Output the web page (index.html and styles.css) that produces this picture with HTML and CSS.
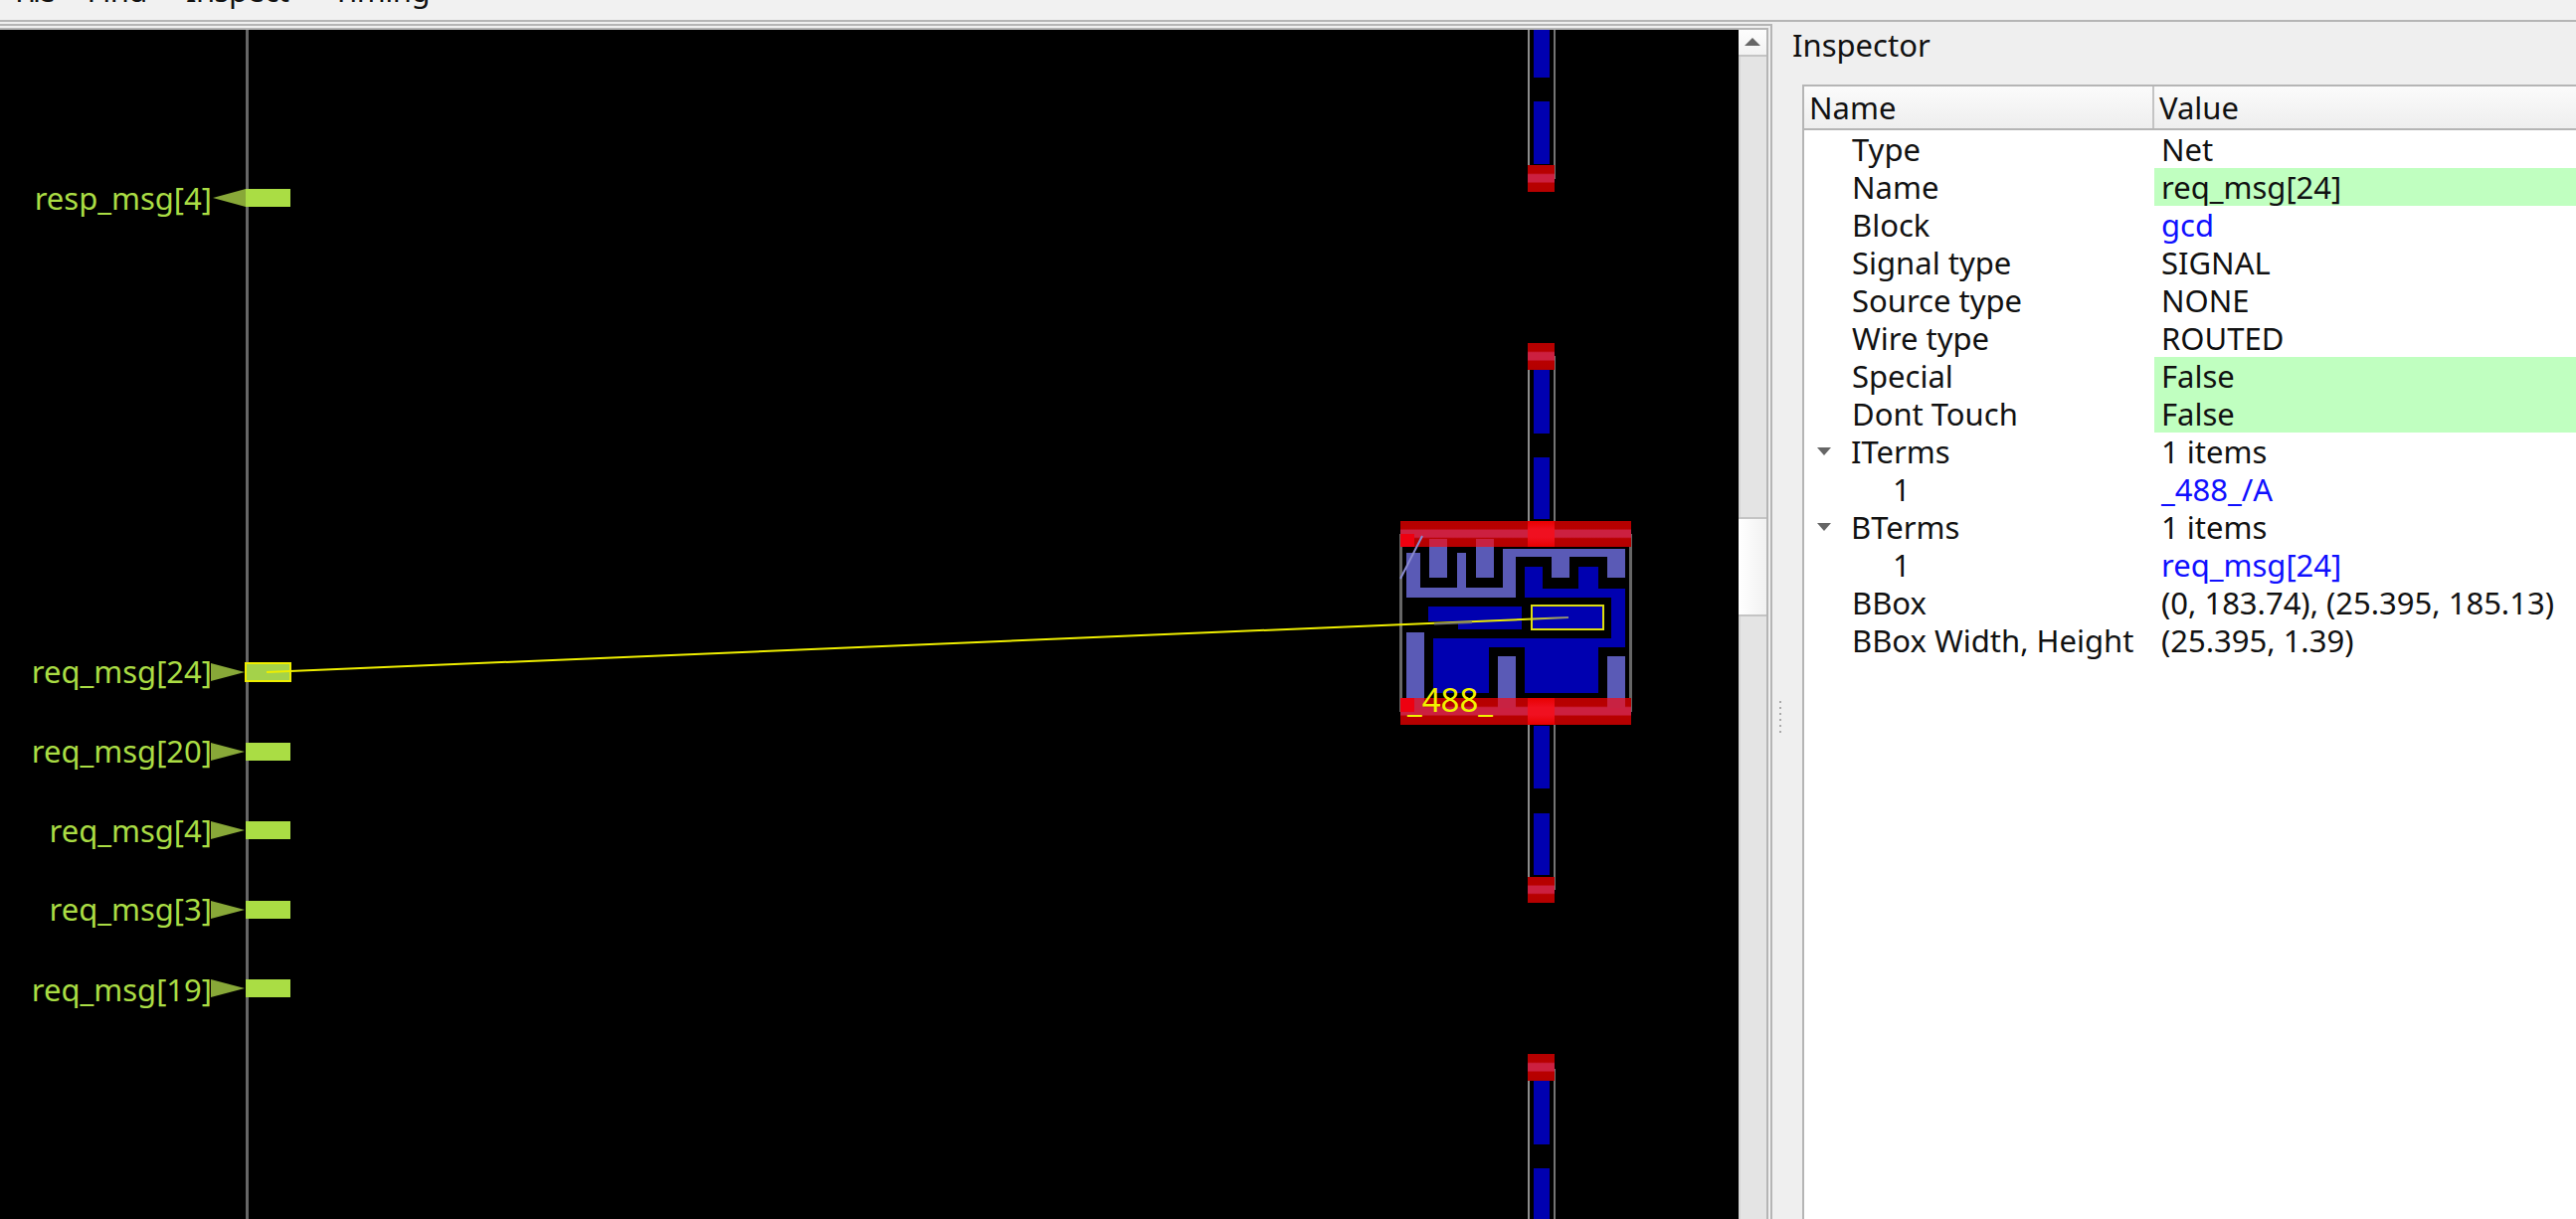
FILE: index.html
```html
<!DOCTYPE html>
<html>
<head>
    <title>OpenROAD</title>
    <link rel="stylesheet" href="styles.css">
</head>
<body>
    <div class="menu-bar">
        <span class="menu-item file">File</span>
        <span class="menu-item find">Find</span>
        <span class="menu-item inspect">Inspect</span>
        <span class="menu-item timing">Timing</span>
    </div>

    <div class="workspace">
        <div class="view-outer">
            <div class="view-inner">
                <svg class="layout" viewBox="0 30 1748 1196" width="1748" height="1196">
                    <defs>
                        <linearGradient id="railDark" x1="0" y1="0" x2="0" y2="1">
                            <stop offset="0" stop-color="#b40000"/>
                            <stop offset="0.3" stop-color="#b80000"/>
                            <stop offset="0.36" stop-color="#cc2040"/>
                            <stop offset="0.62" stop-color="#cc2040"/>
                            <stop offset="0.68" stop-color="#b80000"/>
                            <stop offset="1" stop-color="#b40000"/>
                        </linearGradient>
                        <linearGradient id="railBright" x1="0" y1="0" x2="0" y2="1">
                            <stop offset="0" stop-color="#e80000"/>
                            <stop offset="0.36" stop-color="#f01020"/>
                            <stop offset="0.62" stop-color="#f01020"/>
                            <stop offset="1" stop-color="#e80000"/>
                        </linearGradient>
                        <linearGradient id="flightEnd" gradientUnits="userSpaceOnUse" x1="1530" y1="0" x2="1577" y2="0">
                            <stop offset="0" stop-color="#eeee00"/>
                            <stop offset="1" stop-color="#888880"/>
                        </linearGradient>
                    </defs>

                    <!-- die edge -->
                    <rect class="edge" x="247" y="30" width="3" height="1196"/>

                    <!-- power stubs -->
                    <g>
                        <rect class="stub-edge" x="1536" y="30" width="2" height="150"/>
                        <rect class="stub-edge dim" x="1562" y="30" width="2" height="150"/>
                        <rect class="metal" x="1542" y="30" width="16" height="48"/>
                        <rect class="metal" x="1542" y="102" width="16" height="63"/>
                        <rect class="cap" x="1536" y="166" width="27" height="27"/>

                        <rect class="stub-edge" x="1536" y="358" width="2" height="166"/>
                        <rect class="stub-edge dim" x="1562" y="358" width="2" height="166"/>
                        <rect class="metal" x="1542" y="372" width="16" height="64"/>
                        <rect class="metal" x="1542" y="460" width="16" height="62"/>
                        <rect class="cap" x="1536" y="345" width="27" height="27"/>

                        <rect class="stub-edge" x="1536" y="729" width="2" height="166"/>
                        <rect class="stub-edge dim" x="1562" y="729" width="2" height="166"/>
                        <rect class="metal" x="1542" y="730" width="16" height="63"/>
                        <rect class="metal" x="1542" y="818" width="16" height="62"/>
                        <rect class="cap" x="1536" y="882" width="27" height="26"/>

                        <rect class="stub-edge" x="1536" y="1075" width="2" height="151"/>
                        <rect class="stub-edge dim" x="1562" y="1075" width="2" height="151"/>
                        <rect class="metal" x="1542" y="1087" width="16" height="64"/>
                        <rect class="metal" x="1542" y="1175" width="16" height="51"/>
                        <rect class="cap" x="1536" y="1060" width="27" height="27"/>
                    </g>

                    <!-- cell _488_ -->
                    <g>
                        <rect class="cell-edge" x="1407" y="537" width="3" height="179"/>
                        <rect class="cell-edge" x="1638" y="537" width="3" height="179"/>

                        <rect class="poly" x="1414" y="556" width="14" height="45"/>
                        <rect class="poly" x="1414" y="591" width="110" height="10"/>
                        <rect class="poly" x="1437" y="542" width="18" height="39"/>
                        <rect class="poly" x="1465" y="556" width="9" height="36"/>
                        <rect class="poly" x="1484" y="542" width="18" height="39"/>
                        <rect class="poly" x="1511" y="552" width="13" height="49"/>
                        <rect class="poly" x="1511" y="552" width="123" height="8"/>
                        <rect class="poly" x="1560" y="552" width="18" height="29"/>
                        <rect class="poly" x="1616" y="552" width="18" height="29"/>
                        <rect class="poly" x="1414" y="636" width="18" height="76"/>
                        <rect class="poly" x="1506" y="660" width="18" height="52"/>
                        <rect class="poly" x="1616" y="660" width="18" height="52"/>

                        <rect class="metal" x="1533" y="570" width="18" height="31"/>
                        <rect class="metal" x="1587" y="570" width="20" height="31"/>
                        <rect class="metal" x="1533" y="592" width="101" height="9"/>
                        <rect class="metal" x="1620" y="601" width="14" height="50"/>
                        <rect class="metal" x="1441" y="642" width="193" height="9"/>
                        <rect class="metal" x="1441" y="651" width="56" height="46"/>
                        <rect class="metal" x="1533" y="651" width="74" height="46"/>
                        <rect class="metal" x="1436" y="610" width="94" height="15"/>
                        <rect class="metal" x="1466" y="625" width="64" height="8"/>
                        <rect class="metal" x="1540" y="610" width="72" height="23"/>

                        <rect class="rail" x="1408" y="524" width="232" height="26"/>
                        <rect class="rail" x="1408" y="702" width="232" height="27"/>
                        <rect class="rail-via" x="1536" y="524" width="27" height="26"/>
                        <rect class="rail-via" x="1536" y="702" width="27" height="27"/>
                        <rect class="rail-pin" x="1408" y="537" width="14" height="13"/>
                        <rect class="rail-pin" x="1408" y="702" width="14" height="14"/>
                        <rect class="rail-over" x="1437" y="542" width="18" height="8"/>
                        <rect class="rail-over" x="1484" y="542" width="18" height="8"/>
                        <rect class="rail-over" x="1422" y="702" width="10" height="10"/>
                        <rect class="rail-over" x="1506" y="702" width="18" height="10"/>
                        <rect class="rail-over" x="1616" y="702" width="18" height="10"/>

                        <line class="corner-mark" x1="1408" y1="582" x2="1430" y2="539"/>
                        <text class="cell-name" x="1415" y="716">_488_</text>
                        <rect class="pin-box" x="1540" y="609" width="72" height="24"/>
                    </g>

                    <!-- flight line to the selected pin -->
                    <line class="flight" x1="268" y1="676" x2="1530" y2="623"/>
                    <line class="flight-end" x1="1530" y1="623" x2="1577" y2="621"/>
                    <line class="flight-shade" x1="1442" y1="627.5" x2="1480" y2="626"/>

                    <!-- ports -->
                    <polygon class="port-arrow" points="214,199 247,190 247,208"/>
                    <rect class="port" x="247" y="190" width="45" height="18"/>
                    <text class="port-name" x="213" y="211">resp_msg[4]</text>

                    <polygon class="port-arrow" points="212,667 246,676 212,685"/>
                    <rect class="port selected" x="247" y="667" width="45" height="18"/>
                    <text class="port-name" x="213" y="687">req_msg[24]</text>
                    <line class="flight" x1="268" y1="676" x2="292" y2="675"/>

                    <polygon class="port-arrow" points="212,747 246,756 212,765"/>
                    <rect class="port" x="247" y="747" width="45" height="18"/>
                    <text class="port-name" x="213" y="767">req_msg[20]</text>

                    <polygon class="port-arrow" points="212,826 246,835 212,844"/>
                    <rect class="port" x="247" y="826" width="45" height="18"/>
                    <text class="port-name" x="213" y="847">req_msg[4]</text>

                    <polygon class="port-arrow" points="212,906 246,915 212,924"/>
                    <rect class="port" x="247" y="906" width="45" height="18"/>
                    <text class="port-name" x="213" y="926">req_msg[3]</text>

                    <polygon class="port-arrow" points="212,985 246,994 212,1003"/>
                    <rect class="port" x="247" y="985" width="45" height="18"/>
                    <text class="port-name" x="213" y="1007">req_msg[19]</text>
                </svg>
                <div class="scrollbar">
                    <div class="scroll-up"><span class="scroll-arrow"></span></div>
                    <div class="scroll-thumb"></div>
                </div>
            </div>
        </div>

        <div class="splitter"><div class="splitter-dots"></div></div>

        <div class="inspector">
            <div class="inspector-title">Inspector</div>
            <div class="tree">
                <div class="tree-header">
                    <div class="head-name">Name</div>
                    <div class="head-value">Value</div>
                </div>
                <div class="row"><div class="name">Type</div><div class="value">Net</div></div>
                <div class="row"><div class="name">Name</div><div class="value edit">req_msg[24]</div></div>
                <div class="row"><div class="name">Block</div><div class="value link">gcd</div></div>
                <div class="row"><div class="name">Signal type</div><div class="value">SIGNAL</div></div>
                <div class="row"><div class="name">Source type</div><div class="value">NONE</div></div>
                <div class="row"><div class="name">Wire type</div><div class="value">ROUTED</div></div>
                <div class="row"><div class="name">Special</div><div class="value edit">False</div></div>
                <div class="row"><div class="name">Dont Touch</div><div class="value edit">False</div></div>
                <div class="row"><div class="name parent"><span class="arrow"></span>ITerms</div><div class="value">1 items</div></div>
                <div class="row"><div class="name child">1</div><div class="value link">_488_/A</div></div>
                <div class="row"><div class="name parent"><span class="arrow"></span>BTerms</div><div class="value">1 items</div></div>
                <div class="row"><div class="name child">1</div><div class="value link">req_msg[24]</div></div>
                <div class="row"><div class="name">BBox</div><div class="value">(0, 183.74), (25.395, 185.13)</div></div>
                <div class="row"><div class="name">BBox Width, Height</div><div class="value">(25.395, 1.39)</div></div>
            </div>
        </div>
    </div>
</body>
</html>
```

FILE: styles.css
```css
html, body {
    margin: 0;
    height: 100%;
    overflow: hidden;
}
body {
    font-family: "Noto Sans", "Open Sans", sans-serif;
    font-size: 31px;
    color: #111;
    background-color: #efefef;
}

/* menu bar, only the bottom of the words is on screen */
.menu-bar {
    height: 20px;
    background-color: #f1f1f1;
    overflow: hidden;
    display: flex;
    align-items: flex-start;
}
.menu-item {
    line-height: 38px;
    margin-top: -29px;
    letter-spacing: -0.5px;
}
.file {
    margin-left: 15px;
    letter-spacing: -3px;
}
.find { margin-left: 35px; }
.inspect { margin-left: 39px; }
.timing { margin-left: 44px; }

.workspace {
    display: flex;
    height: 1206px;
    box-sizing: border-box;
    border-top: 2px solid #b5b5b5;
}
.view-outer {
    width: 1782px;
    box-sizing: border-box;
    margin-top: 2px;
    padding: 2px 2px 0 0;
    border-top: 2px solid #b5b5b5;
    border-right: 2px solid #b5b5b5;
}
.view-inner {
    display: flex;
    height: 100%;
    box-sizing: border-box;
    border-top: 2px solid #b5b5b5;
    border-right: 2px solid #b5b5b5;
}

/* layout view */
.layout {
    display: block;
    flex: none;
    background-color: #000;
}
.edge { fill: #666; }
.stub-edge { fill: #8c8c8c; }
.stub-edge.dim { fill: #747474; }
.cell-edge { fill: #666; }
.metal { fill: #0000b0; }
.poly { fill: #5a5ab6; }
.cap, .rail { fill: url(#railDark); }
.rail-via { fill: url(#railBright); }
.rail-pin { fill: #ee0010; }
.rail-over { fill: #c82242; }
.corner-mark {
    stroke: #8a8ad0;
    stroke-width: 2;
}
.cell-name {
    fill: #f2f200;
    font-size: 33px;
}
.pin-box {
    fill: none;
    stroke: #dddd10;
    stroke-width: 2;
}
.flight {
    stroke: #eeee00;
    stroke-width: 2;
}
.flight-end {
    stroke: url(#flightEnd);
    stroke-width: 2;
}
.flight-shade {
    stroke: #77776a;
    stroke-width: 2;
}
.port { fill: #aadd44; }
.port.selected {
    fill: #a4d24a;
    stroke: #eeee00;
    stroke-width: 2;
}
.port-arrow { fill: #88a838; }
.port-name {
    fill: #aadd44;
    font-size: 31px;
    text-anchor: end;
}

/* scrollbar of the layout view */
.scrollbar {
    width: 28px;
    box-sizing: border-box;
    background-color: #e4e4e4;
    border-left: 2px solid #d6d6d6;
}
.scroll-up {
    height: 27px;
    margin-left: -2px;
    display: flex;
    justify-content: center;
    padding-top: 8px;
    box-sizing: border-box;
    background: linear-gradient(#fdfdfd, #f2f2f2);
    border-bottom: 2px solid #c4c4c4;
}
.scroll-arrow {
    width: 0;
    height: 0;
    border-left: 8px solid transparent;
    border-right: 8px solid transparent;
    border-bottom: 8px solid #666;
}
.scroll-thumb {
    height: 100px;
    margin: 463px 0 0 -2px;
    box-sizing: border-box;
    background: linear-gradient(90deg, #fff, #f1f1f1);
    border-top: 2px solid #c4c4c4;
    border-bottom: 2px solid #c4c4c4;
}

.splitter {
    width: 20px;
    flex: none;
}
.splitter-dots {
    width: 2px;
    height: 34px;
    margin: 683px 0 0 7px;
    background: repeating-linear-gradient(#aaa 0, #aaa 2px, transparent 2px, transparent 6px);
}

/* inspector dock */
.inspector {
    flex: 1;
    display: flex;
    flex-direction: column;
    min-width: 0;
}
.inspector-title {
    height: 63px;
    line-height: 46px;
    flex: none;
}
.tree {
    flex: 1;
    margin-left: 10px;
    background-color: #fff;
    border-left: 2px solid #b5b5b5;
}
.tree-header {
    display: grid;
    grid-template-columns: 352px 1fr;
    height: 46px;
    box-sizing: border-box;
    line-height: 42px;
    background: linear-gradient(#fbfbfb, #eeeeee);
    border-top: 2px solid #b5b5b5;
    border-bottom: 2px solid #b5b5b5;
}
.head-name {
    padding-left: 5px;
    border-right: 2px solid #c4c4c4;
    box-sizing: border-box;
}
.head-value {
    padding-left: 5px;
}
.row {
    display: grid;
    grid-template-columns: 352px 1fr;
    height: 38px;
    line-height: 38px;
}
.name {
    padding-left: 48px;
    white-space: nowrap;
}
.name.parent {
    display: flex;
    align-items: center;
    padding-left: 13px;
}
.name.child {
    padding-left: 89px;
}
.arrow {
    width: 0;
    height: 0;
    margin-right: 20px;
    border-left: 7.5px solid transparent;
    border-right: 7.5px solid transparent;
    border-top: 8px solid #666;
}
.value {
    padding-left: 7px;
    white-space: nowrap;
}
.value.edit {
    background-color: #c0ffc0;
}
.value.link {
    color: #1010ff;
}
```
